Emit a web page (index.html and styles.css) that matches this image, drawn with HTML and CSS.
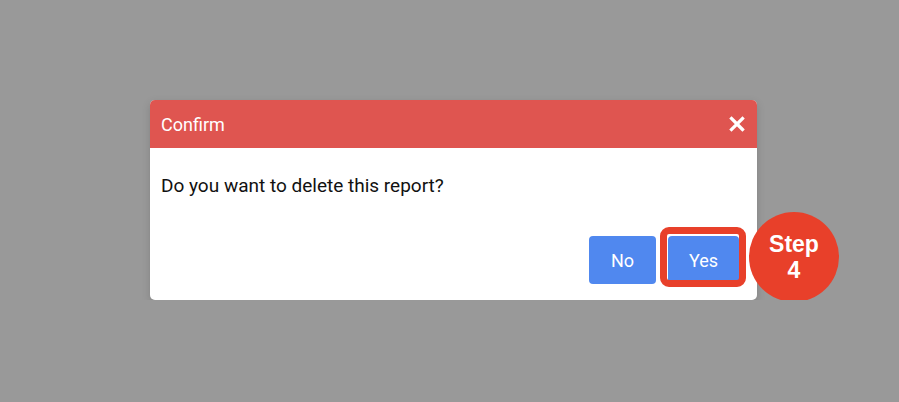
FILE: index.html
```html
<!DOCTYPE html>
<html lang="en">
<head>
    <meta charset="UTF-8">
    <meta name="viewport" content="width=device-width, initial-scale=1.0">
    <title>Confirm</title>
    <link rel="stylesheet" href="styles.css">
</head>
<body>
    <div class="overlay">
        <div class="dialog">
            <div class="dialog-header">
                <span class="dialog-title">Confirm</span>
                <span class="close">
                    <svg width="16" height="16" viewBox="0 0 16 16">
                        <path d="M2.5 2.5 L13.5 13.5 M13.5 2.5 L2.5 13.5" stroke="#fff" stroke-width="3.2" stroke-linecap="square"/>
                    </svg>
                </span>
            </div>
            <div class="dialog-body">Do you want to delete this report?</div>
            <div class="dialog-footer">
                <button class="btn">No</button>
                <button class="btn btn-yes">Yes</button>
            </div>
            <div class="highlight"></div>
            <div class="step">Step<br>4</div>
        </div>
    </div>
</body>
</html>
```

FILE: styles.css
```css
body {
    margin: 0;
    background-color: #999999;
    font-family: Roboto, "Liberation Sans", sans-serif;
}
.overlay {
    padding: 100px 0 0 150px;
}
.dialog {
    position: relative;
    width: 607px;
    height: 200px;
    background-color: #fff;
    border-radius: 5px;
    box-shadow: 0 3px 8px rgba(0, 0, 0, 0.15);
    display: flex;
    flex-direction: column;
}
.dialog-header {
    height: 48px;
    background-color: #df5550;
    border-radius: 5px 5px 0 0;
    display: flex;
    align-items: center;
    justify-content: space-between;
    padding: 0 12px 0 11px;
}
.dialog-title {
    color: #fff;
    font-size: 18px;
}
.close {
    display: flex;
}
.dialog-body {
    padding: 26px 11px 0;
    font-size: 19px;
    color: #111;
}
.dialog-footer {
    margin-top: auto;
    display: flex;
    justify-content: flex-end;
    gap: 12px;
    padding: 0 18px 16px 0;
}
.btn {
    width: 67px;
    height: 48px;
    border: none;
    border-radius: 4px;
    background-color: #5088ef;
    color: #fff;
    font-family: Roboto, "Liberation Sans", sans-serif;
    font-size: 18px;
    padding: 0;
}
.btn-yes {
    width: 71px;
}
.highlight {
    position: absolute;
    left: 510px;
    top: 127px;
    width: 72px;
    height: 46px;
    border: 7px solid #e8402a;
    border-radius: 9px;
}
.step {
    position: absolute;
    left: 599px;
    top: 112px;
    width: 90px;
    height: 90px;
    border-radius: 50%;
    background-color: #e8402a;
    color: #fff;
    font-family: "Liberation Sans", Arial, sans-serif;
    font-weight: bold;
    font-size: 23px;
    line-height: 26px;
    text-align: center;
    display: flex;
    align-items: center;
    justify-content: center;
}
```
